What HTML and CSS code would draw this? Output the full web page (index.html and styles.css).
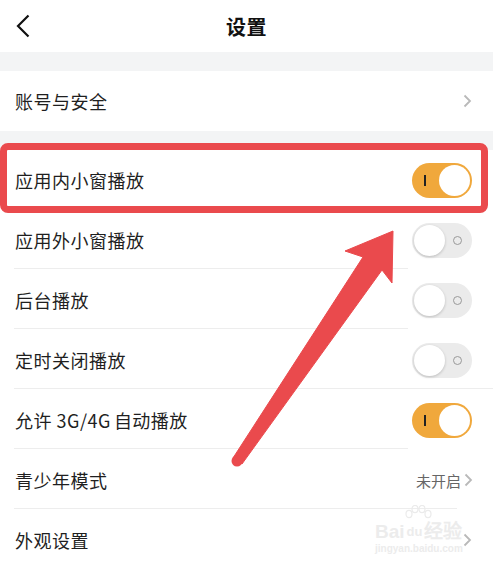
FILE: index.html
```html
<!DOCTYPE html>
<html lang="zh-CN">
<head>
    <meta charset="UTF-8">
    <meta name="viewport" content="width=device-width, initial-scale=1.0">
    <title>设置</title>
    <link rel="stylesheet" href="styles.css">
</head>
<body>
    <div class="page">
        <header class="topbar">
            <svg class="back" width="14" height="24" viewBox="0 0 14 24">
                <path d="M12.5 1.5 L2 12 L12.5 22.5" fill="none" stroke="#111" stroke-width="2.2"/>
            </svg>
            <h1>设置</h1>
        </header>

        <div class="band"></div>

        <div class="group">
            <div class="row">
                <span class="label">账号与安全</span>
                <svg class="chevron" width="9" height="14" viewBox="0 0 9 14">
                    <path d="M1.5 1.5 L7 7 L1.5 12.5" fill="none" stroke="#b9b9b9" stroke-width="1.8"/>
                </svg>
            </div>
        </div>

        <div class="band"></div>

        <div class="group">
            <div class="row">
                <span class="label">应用内小窗播放</span>
                <span class="switch on"><i class="mark"></i><i class="knob"></i></span>
            </div>
            <div class="row line-short">
                <span class="label">应用外小窗播放</span>
                <span class="switch"><i class="knob"></i><i class="mark"></i></span>
            </div>
            <div class="row line-short">
                <span class="label">后台播放</span>
                <span class="switch"><i class="knob"></i><i class="mark"></i></span>
            </div>
            <div class="row line-long">
                <span class="label">定时关闭播放</span>
                <span class="switch"><i class="knob"></i><i class="mark"></i></span>
            </div>
            <div class="row line-short">
                <span class="label">允许 3G/4G<span class="thin"></span>自动播放</span>
                <span class="switch on"><i class="mark"></i><i class="knob"></i></span>
            </div>
            <div class="row line-mid">
                <span class="label">青少年模式</span>
                <span class="value">未开启
                    <svg class="chevron" width="9" height="14" viewBox="0 0 9 14">
                        <path d="M1.5 1.5 L7 7 L1.5 12.5" fill="none" stroke="#b9b9b9" stroke-width="1.8"/>
                    </svg>
                </span>
            </div>
            <div class="row">
                <span class="label">外观设置</span>
                <svg class="chevron" width="9" height="14" viewBox="0 0 9 14">
                    <path d="M1.5 1.5 L7 7 L1.5 12.5" fill="none" stroke="#b9b9b9" stroke-width="1.8"/>
                </svg>
            </div>
        </div>

        <!-- annotation overlays -->
        <div class="highlight"></div>
        <svg class="arrow" width="493" height="566" viewBox="0 0 493 566">
            <polygon points="233,458 363,257 345,251 393,231 392,283 382,270 242,464" fill="#ea4a4d" stroke="#ea4a4d" stroke-width="1" stroke-linejoin="round"/>
            <circle cx="237" cy="461" r="5.5" fill="#ea4a4d"/>
        </svg>
        <div class="watermark">
            <svg class="paw" width="30" height="26" viewBox="0 0 30 26">
                <g fill="none" stroke="#ebebeb" stroke-width="1.2">
                    <ellipse cx="6" cy="9" rx="3" ry="3.6"/>
                    <ellipse cx="12" cy="4" rx="3" ry="3.6"/>
                    <ellipse cx="19" cy="4" rx="3" ry="3.6"/>
                    <ellipse cx="25" cy="9" rx="3" ry="3.6"/>
                </g>
            </svg>
            <div class="wm-main"><span>Bai</span><span class="du">du</span><span>经验</span></div>
            <div class="wm-sub">jingyan.baidu.com</div>
        </div>
    </div>
</body>
</html>
```

FILE: styles.css
```css
body {
    margin: 0;
    background: #fff;
    font-family: "Noto Sans CJK SC", "Noto Sans", sans-serif;
    color: #1f1f1f;
}

.page {
    position: relative;
    width: 493px;
    height: 566px;
    overflow: hidden;
    background: #fff;
}

.topbar {
    height: 52px;
    display: flex;
    align-items: center;
    justify-content: center;
    position: relative;
}

.topbar h1 {
    margin: 0;
    font-size: 20px;
    font-weight: 700;
    color: #111;
    letter-spacing: 0.5px;
}

.back {
    position: absolute;
    left: 16px;
    top: 14px;
}

.band {
    height: 19px;
    background: #f3f4f5;
}

.row {
    height: 60px;
    display: flex;
    align-items: center;
    justify-content: space-between;
    padding: 0 21px 0 15px;
    position: relative;
}

.row.line-short::after,
.row.line-mid::after,
.row.line-long::after {
    content: "";
    position: absolute;
    left: 14px;
    bottom: 1px;
    height: 1px;
    background: #ededed;
}

.row.line-short::after { width: 394px; }
.row.line-mid::after { width: 443px; }
.row.line-long::after { width: 479px; }

.label {
    font-size: 18px;
    letter-spacing: 0.5px;
    margin-top: -1px;
}

.label .thin {
    display: inline-block;
    width: 3px;
}

.value {
    display: flex;
    align-items: center;
    gap: 3px;
    font-size: 15px;
    color: #666;
    margin-right: -1px;
}

.chevron {
    display: block;
}

.switch {
    width: 60px;
    height: 35px;
    border-radius: 18px;
    background: #ebebeb;
    display: flex;
    align-items: center;
    justify-content: space-between;
    box-sizing: border-box;
    padding: 2px;
}

.switch .knob {
    width: 31px;
    height: 31px;
    border-radius: 50%;
    background: #fff;
    box-shadow: 0 1px 3px rgba(0, 0, 0, 0.2);
}

.switch .mark {
    width: 7px;
    height: 7px;
    border: 1.3px solid #9a9a9a;
    border-radius: 50%;
    margin-right: 8px;
}

.switch.on {
    background: #f0a83c;
}

.switch.on .knob {
    box-shadow: none;
}

.switch.on .mark {
    width: 1.5px;
    height: 11px;
    border: none;
    border-radius: 0;
    background: #222;
    margin: 0 0 0 10px;
}

.highlight {
    position: absolute;
    left: 0;
    top: 143px;
    width: 488px;
    height: 70px;
    box-sizing: border-box;
    border: 7px solid #ea4a4d;
    border-radius: 8px;
}

.arrow {
    position: absolute;
    left: 0;
    top: 0;
}

.watermark {
    position: absolute;
    left: 375px;
    top: 505px;
    width: 100px;
    color: #ececec;
    font-family: "Liberation Sans", sans-serif;
}

.paw {
    display: block;
    margin-left: 28px;
}

.wm-main {
    font-size: 19px;
    font-weight: 700;
    line-height: 18px;
    margin-top: -8px;
    display: flex;
    gap: 2px;
}

.wm-main .du {
    font-size: 13px;
}

.wm-sub {
    font-size: 10px;
    font-weight: 700;
    margin-top: 2px;
}
```
